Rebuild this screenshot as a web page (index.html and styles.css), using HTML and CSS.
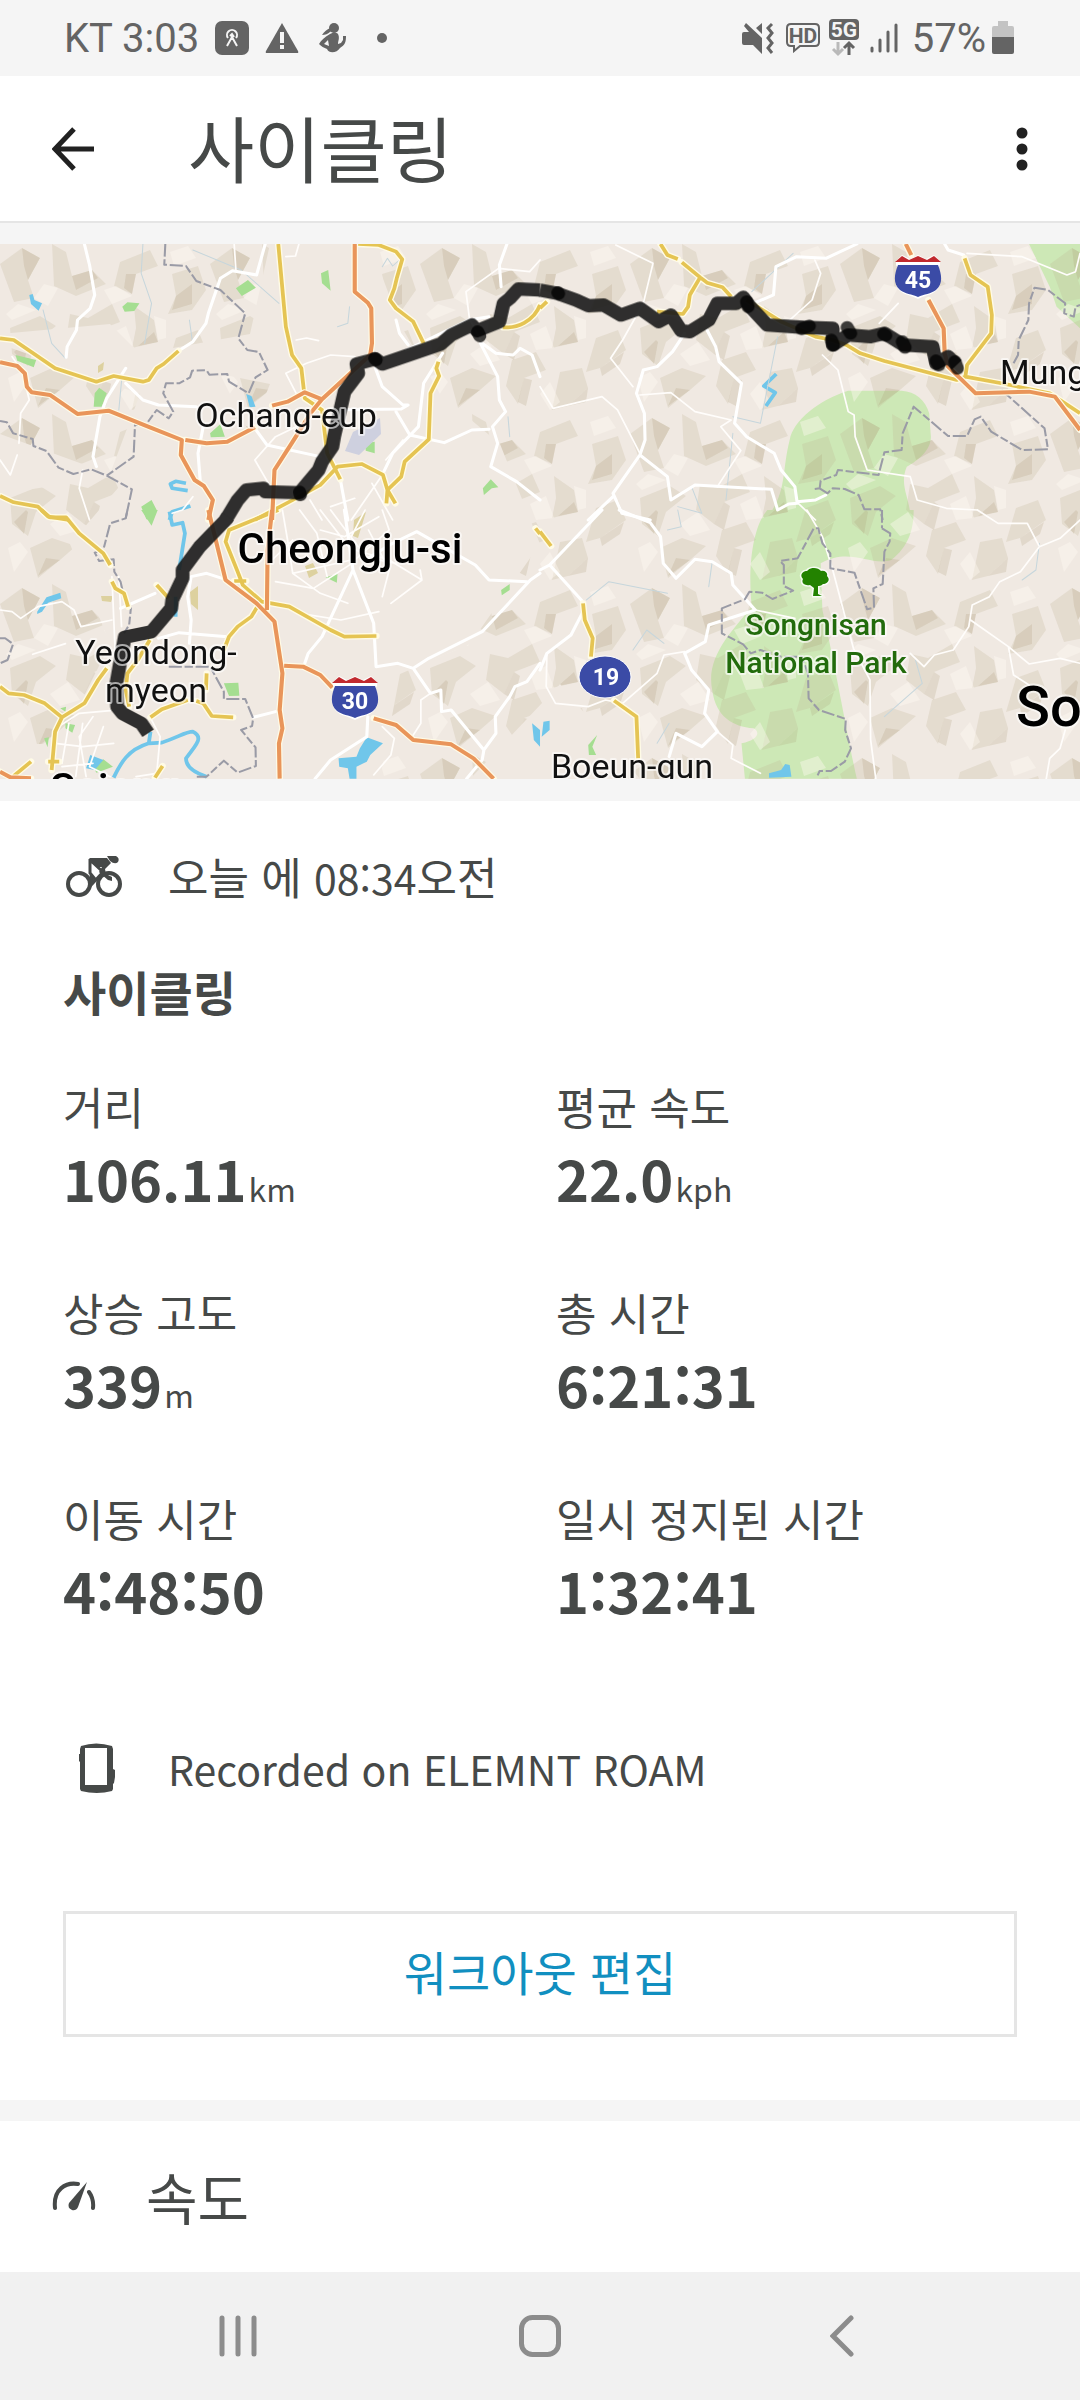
FILE: index.html
```html
<!DOCTYPE html>
<html lang="ko">
<head>
    <meta charset="UTF-8">
    <meta name="viewport" content="width=device-width, initial-scale=1.0">
    <title>사이클링</title>
    <link rel="stylesheet" href="styles.css">
</head>
<body>

    <div class="status-bar">
        <div class="status-left">
            <span>KT 3:03</span>
            <svg class="status-app" width="34" height="34" viewBox="0 0 34 34">
                <rect width="34" height="34" rx="7" fill="#646464"/>
                <path d="M13 17a5 5 0 1 1 8 0M12 25l5-9 5 9M15 15l2-2 2 3" fill="none" stroke="#f5f5f5" stroke-width="2"/>
            </svg>
            <svg width="34" height="30" viewBox="0 0 34 30">
                <path d="M17 0L33 28q1 2-1 2H2q-2 0-1-2z" fill="#646464"/>
                <path d="M15 9h4v11h-4zM15 22h4v4h-4z" fill="#f5f5f5"/>
            </svg>
            <svg class="status-person" width="28" height="32" viewBox="0 0 28 32">
                <circle cx="15" cy="6" r="5" fill="#646464"/>
                <path d="M12 6c-4 1-7 4-9 7 3 0 6-1 9-4zM11 12c3-2 6-2 8 0 2 4 0 7 0 10l3-1 2-3 0-4h3c0 6-1 9-6 12-3 5-11 6-13 1-3-1-6-3-8-5 2-4 6-7 11-10zM5 22l5 2-1-6z" fill="#646464" fill-rule="evenodd"/>
            </svg>
            <svg width="10" height="10" viewBox="0 0 10 10"><circle cx="5" cy="5" r="5" fill="#646464"/></svg>
        </div>
        <div class="status-right">
            <svg class="status-mute" width="32" height="32" viewBox="0 0 32 32">
                <path d="M0 12q0-2 2-2h5L2 4l2-3 16 15v16l-9-9H2q-2 0-2-2zM14 6l6-5v11z" fill="#646464"/>
                <path d="M30 2l-4 4 4 5-4 5 4 5-4 5 4 5" fill="none" stroke="#646464" stroke-width="3"/>
            </svg>
            <svg class="status-hd" width="34" height="30" viewBox="0 0 34 30">
                <path d="M5 1h24q4 0 4 4v14q0 4-4 4H14l-6 5v-5H5q-4 0-4-4V5q0-4 4-4z" fill="none" stroke="#646464" stroke-width="2"/>
                <text class="hd" x="17" y="20" text-anchor="middle">HD</text>
            </svg>
            <svg width="30" height="38" viewBox="0 0 30 38">
                <rect width="30" height="21" rx="4" fill="#646464"/>
                <text class="five-g" x="15" y="18" text-anchor="middle">5G</text>
                <path d="M9 23v12M4 30l5 5 5-5" fill="none" stroke="#b9b9b9" stroke-width="3"/>
                <path d="M20 36V24M15 29l5-5 5 5" fill="none" stroke="#646464" stroke-width="3"/>
            </svg>
            <svg class="status-signal" width="28" height="30" viewBox="0 0 28 30">
                <path d="M2 25v3M10 17v11M18 9v19M26 2v26" stroke="#646464" stroke-width="3" stroke-linecap="round"/>
            </svg>
            <span>57%</span>
            <svg class="status-battery" width="22" height="34" viewBox="0 0 22 34">
                <path d="M6 0h10v5h4q2 0 2 2v9H0V7q0-2 2-2h4z" fill="#c3c3c3"/>
                <path d="M0 16h22v15q0 2-2 2H2q-2 0-2-2z" fill="#646464"/>
            </svg>
        </div>
    </div>

    <header class="app-bar">
        <button class="icon-button" aria-label="뒤로">
            <svg width="42" height="44" viewBox="0 0 42 44"><path d="M22 2L3 22l19 20M3 22h39" fill="none" stroke="#212121" stroke-width="5"/></svg>
        </button>
        <h1>사이클링</h1>
        <button class="icon-button" aria-label="메뉴">
            <svg width="12" height="44" viewBox="0 0 12 44" fill="#212121"><circle cx="6" cy="6" r="5.5"/><circle cx="6" cy="22" r="5.5"/><circle cx="6" cy="38" r="5.5"/></svg>
        </button>
    </header>

    <div class="map">
        <svg viewBox="0 0 1080 535" role="img" aria-label="라이딩 경로 지도">
            <defs>
                <!-- hill shading facets -->
                <pattern id="relief" width="210" height="170" patternUnits="userSpaceOnUse">
                    <g fill="#b9ab8d" fill-opacity=".22">
                        <path d="M0 20l22-16 18 10-12 22 6 18-20 4zM52 0l14 8 6 24 20-6 14 14-30 12-22-10zM120 18l30-12 8 16-22 8-4 20-18-8zM172 30l26-8 8 24-14 20-24 4 8-18zM10 84l30-12 16 10-20 16-8 24-16-12zM70 70l18 4 24-14 8 18-26 10-10 22-18-14zM134 62l20 14 4 22-26 6 4-20zM176 94l22-8 8 20-26 18-14 4zM30 134l22-10 24 8-16 14-22 18zM92 116l24-8 10 18-22 8-6 26-12-18zM140 128l22-4 6 20-20 18-16 4z"/>
                    </g>
                    <g fill="#a5966f" fill-opacity=".2">
                        <path d="M22 4l18 10-12 22-4-14zM72 32l20-6 6 8-22 12zM136 30l-4 20-8-6 2-14zM176 52l16-12 0 20-20 6zM28 98l-4 22-10-12 12-12zM84 110l10-22 6 4-6 24zM158 98l-20 4 16-14zM180 124l24-16-4 12-18 12zM60 146l-22 16 8-18zM98 158l6-24 8 2-6 26zM148 162l20-18-2 14z"/>
                    </g>
                    <g fill="#fffaf2" fill-opacity=".4">
                        <path d="M34 54l10-14 14 4-10 18zM104 46l12-4 16 10-20 8zM6 70l12-10 18 6-24 10zM154 72l12 4 0 18-8 2zM110 90l16-8 8 22-18 2zM50 110l18-12 12 18-20 6zM8 134l12-6 8 10-14 20zM170 8l18-6 8 12-22 8zM120 150l10-12 10 20-10 8z"/>
                    </g>
                </pattern>
                <symbol id="shield" viewBox="0 0 48 45">
                    <path d="M2 7l6-6 8 4 8-4 8 4 8-4 6 6v4l-3 5c6 12 3 20-6 24-6 2-9 3-13 5-4-2-7-3-13-5-9-4-12-12-6-24l-3-5z" fill="#fff"/>
                    <path d="M1 8l7-6 7 4 9-4 9 4 7-4 7 6z" fill="#c1292e"/>
                    <path d="M4 11h40c4 10 5 19-2 25-5 4-12 4-18 7-6-3-13-3-18-7-7-6-6-15-2-25z" fill="#3b4ba6"/>
                </symbol>

                <!-- each road layer is split in four tiles -->
                <g id="minor">
                    <g transform="matrix(.3444 0 0 .3333 0 -4)">
                        <path d="M680 12L685 92M830 50l28-2 10-36M860 300l30-6 35 8M860 460l-30-60 60-30 70-25 70 5M1568 60l-30 35-90-10-95 70 10 80 40 80M740 660l60-70 60-30M740 660l45 80M35 350l30 45 20 85-25 40-5 90M0 660l30 45 20-60M240 690l-10 55 30 95M560 770l-30 40-30 10M900 780l35 60M1110 705l-40 60-50 75M1170 600l-50 60M1080 730l60 110M960 800l70-25"/>
                    </g>
                    <g transform="matrix(.3444 0 0 .3333 540 -4)">
                        <path d="M220 15l108 55-28 120-60 110-35 55 65 85M798 60l17 40-25 80-70 65M820 345l45 45 30 125 17 10 3 65 35 100 125 20 20 70 85 25 90 5M1040 190l-55 60M1240 40l160 10 130 55 25-10 13-55M0 440l38 65 142-35 45 40 65 130M290 465l90-7 70 57 105 25-30 20 58 72-68 108M750 790l50 50"/>
                    </g>
                    <g transform="matrix(.3444 0 0 .3333 0 266)">
                        <path d="M0 300l35 5 25 20 50-35 70-15 35 25 20 50 90-20M95 433l95-32M325 200l10 240M345 200l8 150M820 0l15 90 15 100 80 60 80 30M850 190l170-40M800 215l110 20 120-80M870 0l50 70 30 130M930 0l90 120M960 0l80 110M1060 0l-40 80M1100 20l-100 60-70-20M1110 0l20 60-100 90M850 90l-60 60M1070 60l60 120-20 80M1030 120l100 30 95 60M1220 180l5 30-90 70M870 310l120 20 110-25M1050 140l100 20M1250 550l-28 20 0 70-25 40M1110 650l35 35-10 50-50 60M170 650l60-40 90-8M160 700l80 10 90-10M200 640l-20 120M240 640l-20 160M270 620l-40 60 20 120M300 650l-40 120 60 30M440 630l25 50-10 110-60 10M180 770l90-10"/>
                    </g>
                    <g transform="matrix(.3444 0 0 .3333 540 266)">
                        <path d="M420 425l-60 10-20 55-100 90-50-10-50 20-95-10-27-50 2-100M515 665l45 40-5 40 85 45M775 0l45 80 30 100 60 235 48 95 2 180 15 116M625 300l115 25M1270 0l60 40h85l35 70-55 75-60 30-30 45-50 25-10 65-45 70-55 15-30 35-40-40M1250 330l110 80 60 52 90-17 58 15M1360 410l15 85 45 30M1525 660l-15 55-30 30-10 61M1450 110l60-25 58-55"/>
                    </g>
                </g>
                <g id="secondary">
                    <g transform="matrix(.3444 0 0 .3333 0 -4)">
                        <path d="M245 12l15 63 15 90-13 40-37 35-3 30-27 50-3 32M770 12l-25 93-70-13-35 23-35 105-7 30-38 55-42 28M365 385l-55 90-20 55-20 120 10 30M365 430l50 50 45 15 110 5M590 560l-15 80 7 90M740 565l35 50 155 35M1090 385l20 55 60 55 15 0-20 12-215 3M1395 310l50 100 5 70 18 35-38 45 15 50-20 70 75 45 68 55M1420 568l-50 2-80 38-100-23-40-70M1400 310l40 30 50 5 20-20 35 20 23 65M1472 12l-22 63 5 65M1285 340l-55 90-15 130-75 80-30 65M988 718l22 122M1150 240l10 40 25 35M1180 330l180-90 60-10"/>
                    </g>
                    <g transform="matrix(.3444 0 0 .3333 540 -4)">
                        <path d="M920 12l-90 43-85-5-60 30-7 85-58 25M485 270l25 50 10 45 65 65-20 120 35 40 80 50 20 50 40 50 7 50-25 2-32 18-18-62-222-13-70 45-10-70-80-65 15-45-2-80-23-60 20-70 40-10 45-45 35-55M290 645l-78 115 26 60 82 20M212 770l-72 70M1175 12l10 18 45 15M747 785l53-5 30-15"/>
                    </g>
                    <g transform="matrix(.3444 0 0 .3333 0 266)">
                        <path d="M350 295l100-45M555 200l45-10 45 15M555 200l-10 60 10 70-5 70M460 385l60-17 140 12M1000 0l25 180 60 160 7 130 63-10 45 15 45-30 155-80 50-55 90-100 28-20M1025 180l-90 200-40 50-10 30M1200 475l50 75 30-10 2 65 28-5 95 120-5 30-45 56M1405 720l35-50-2-50 42-60 15-30 35-15 38-55M735 622l65-17M1068 620l-3 60-105 70-45 56M1060 150l80-50 70-35 170 100 40 45 110 5"/>
                    </g>
                    <g transform="matrix(.3444 0 0 .3333 540 266)">
                        <path d="M180 0L28 165M0 180l28-15 92 105 5 10M230 0l90 38 30 42 8 80 37 45 55-57 50 7 55 35 5 35 65 75-135 45-10 50-60 35 20 50 50 60-12 70 37 55-45 45-75-40-20 70M125 305l-35 70-70 55-20 50"/>
                    </g>
                </g>
                <g id="primary">
                    <g transform="matrix(.3444 0 0 .3333 0 -4)">
                        <path d="M0 295l40 5 120 85 120 40 50-17 85 17 17-5 23-35 20-13 43-39M808 12l22 248 18 85 27 40 10 90 50 35 15 130 38 78M1040 12l60 3 50 20 18 23-16 57-7 30-13 35 18 25 50 40 30 65M1273 365l-6 20 8 23-25 52-5 138-70 67-10 45-40 40-3 40M1148 790l-23-40-13-45-62-33-70 8-50 55-80 45-110 60M1460 262c40 3 90-17 108-67M0 768l40 19 70 13 30 30 60 10"/>
                    </g>
                    <g transform="matrix(.3444 0 0 .3333 540 -4)">
                        <path d="M0 205l20-20M350 12l20 33 30 12M412 67l53 45 20 16 45 14 25 28M465 112l-30 53-5 35-15 22-75-7M600 180l100 65 100 45 50 10 40 15 40 25 70 23 210 57 25-10 5-35 70-95 2-55-12-85-50-35-17-50M1235 410l105 20 140 30 88 60"/>
                    </g>
                    <g transform="matrix(.3444 0 0 .3333 0 266)">
                        <path d="M120 0l25 22h47l38 48 70 60 20 35M325 215l10 20 25 15 12 40M455 225l35 40M808 0L665 60l-10 35 35 90 15 40 55 50 80 15 120 70 40 20 93-2M680 213h35M750 285l-20 35-40 30-25 30-15 40M600 490l-2 50M570 573l20 7 25 38 62 4M0 530l25 20 45 5 60 25 50 42-20 43-10 115M180 622l65-42 40-70 25-35M435 390l-35 60-30 40-5 50 10 50M437 622l33-24 75-28M40 798l50-43M450 803l22-35M140 755h32M1555 55l13 17"/>
                    </g>
                    <g transform="matrix(.3444 0 0 .3333 540 266)">
                        <path d="M0 65l32 43M125 280l5 50 23 55-5 55M215 572l65 48 5 125"/>
                    </g>
                </g>
                <g id="motorway">
                    <g transform="matrix(.3444 0 0 .3333 0 -4)">
                        <path d="M0 367l50 11 22 22 6 40 14 17 53 8 80 57 90-10 115 48 98 40-3 45 40 75 27 18 26 42-13 60M538 600l62 10 60-5 80-43M790 497l45-12 50-28 50 21 140-133 5-35-2-105-10-17-38-33V12M935 478l-30 37-55 90-53 85-7 150"/>
                    </g>
                    <g transform="matrix(.3444 0 0 .3333 540 -4)">
                        <path d="M1062 12l16 33M1128 180l44 85 3 75 10 40 80 80 155-5 75 15 73 100"/>
                    </g>
                    <g transform="matrix(.3444 0 0 .3333 0 266)">
                        <path d="M605 0l50 210 90 70 52 55 23 155-8 110 8 55-10 45 2 106M790 0l-13 120-2 180M825 467l55 3 50 25 35 38M1085 625l65 20 50 45 110 13 65 42 58 61M0 785l30 17 60 3"/>
                    </g>
                </g>
            </defs>

            <rect width="1080" height="535" fill="#f0e9e2"/>

            <!-- national park and woods -->
            <g fill="#cde8b6">
                <path transform="matrix(.3444 0 0 .3333 540 -4)" d="M895 452C810 480 735 540 725 600C700 700 720 760 650 845L1075 845C1080 780 1040 740 1065 680C1100 660 1135 630 1135 590L1130 520C1120 480 1090 455 1050 452zM1420 12L1480 140L1500 200L1568 265V12z"/>
                <path transform="matrix(.3444 0 0 .3333 540 266)" d="M660 0C610 60 605 200 615 290C560 360 480 440 500 540C510 620 560 650 620 655C640 665 635 690 585 700L595 806L920 806C900 720 860 480 820 300L815 160C900 110 960 170 1020 150C1070 110 1085 60 1085 0z"/>
            </g>
            <path fill="url(#relief)" d="M0 0H270L250 90L140 110L110 80L0 90zM0 100L140 150L110 230L0 190zM370 0H1080V535H640L560 440L470 535H380L400 430L470 400L540 300L500 200L440 150L400 80zM0 250L130 230L70 300L110 400L60 500H0zM220 130L270 140L250 190z"/>

            <g fill="#a5de91">
                <path transform="matrix(.3444 0 0 .3333 0 -4)" d="M685 145L720 120L743 143L702 168zM932 100L953 90L960 152L935 130zM355 200L370 187L405 190L390 213L362 215zM45 345L105 360L98 382L50 362zM275 460L288 443L310 460L295 500H272zM610 580L640 552L653 590L612 592zM1060 610L1088 605V640L1062 632zM1402 745L1425 718L1447 742L1428 745L1405 765zM410 800L440 780L455 810L440 840L425 838z"/>
                <path transform="matrix(.3444 0 0 .3333 0 266)" d="M410 0H458L440 47zM650 520L692 518L695 557L665 558zM945 202L980 192L978 218zM1455 240L1480 222V240L1457 256zM190 640L218 645L210 668L190 655zM128 685L142 682L138 712zM270 770L300 748L328 770L280 788zM175 595L192 590L190 605z"/>
                <path transform="matrix(.3444 0 0 .3333 540 266)" d="M140 705L166 675L152 710L163 735L142 735z"/>
            </g>
            <path fill="#ddd19f" d="M190 348l8-6v24l-7-6zM354 276l12-8-8 26-5-2zM305 322l8-3 5 10-9 5zM98 122l6-4-1 8-5 3zM101 352l12 0-2 6-9-1z"/>
            <path fill="#ced0df" d="M345 207l8-19 27-14 1 16-22 21z"/>
            <g fill="#70c6ea">
                <path transform="matrix(.3444 0 0 .3333 0 -4)" d="M85 165L95 162L100 180L122 190L112 212L90 192zM715 462L730 468L742 500L725 502z"/>
                <path transform="matrix(.3444 0 0 .3333 0 266)" d="M108 305L135 262L175 248L178 265L140 278L122 305L108 312zM1065 682L1112 700L1075 735L1065 755L1035 770V806H1015L1010 775L985 770L983 745L1035 740L1045 715zM250 775L262 735L300 750L275 780zM1545 640L1568 660V710L1550 690z"/>
                <path transform="matrix(.3444 0 0 .3333 540 266)" d="M10 635L28 632V660L5 680zM665 790L700 780L712 762L725 765L730 800L665 803z"/>
            </g>
            <g class="water">
                <path transform="matrix(.3444 0 0 .3333 0 -4)" d="M540 730L510 724L495 732L500 745L545 752M553 798L500 815L492 840"/>
                <path transform="matrix(.3444 0 0 .3333 0 266)" d="M492 5L500 45L530 38L537 70L520 180M510 260V320M437 665L432 700C370 720 350 760 330 803M432 700L470 698C520 680 540 665 560 665C590 680 575 700 540 745C540 775 570 790 600 800"/>
                <path transform="matrix(.3444 0 0 .3333 540 -4)" d="M686 402L650 438L683 458L656 498"/>
            </g>
            <g class="stream">
                <path transform="matrix(.3444 0 0 .3333 0 -4)" d="M125 210L150 310L190 355M415 12L410 100L440 190L420 310M355 400L345 510M560 30L700 90L810 190M550 240L558 300M1110 80L1125 55L1140 78L1160 60M1015 200L1010 250L980 260M1475 530L1480 590"/>
                <path transform="matrix(.3444 0 0 .3333 540 -4)" d="M615 155L735 40M690 290L640 550L560 530M440 740L470 820L400 800M560 580L540 780"/>
                <path transform="matrix(.3444 0 0 .3333 540 266)" d="M400 0L410 50L370 60M135 270L200 215L370 250M270 420L310 360L360 400M500 155L490 230M1090 450L1110 520L1000 620M1450 100L1440 180L1400 210M340 700L375 640"/>
            </g>

            <use href="#minor" class="road-minor"/>
            <use href="#secondary" class="road-secondary"/>
            <g class="border-line">
                <path transform="matrix(.3444 0 0 .3333 0 -4)" d="M480 12L477 74L540 78L570 123L640 150L712 220L692 295L718 330L752 336L777 390L742 412L722 460L665 425L660 402L608 404L600 391L558 392L552 412L520 430H482L474 460L503 515L490 535L455 510L425 552L392 555L388 650L310 707L265 688L213 702L170 683L135 633L97 618L95 597L38 580L20 547L0 543M310 707L383 748L365 835"/>
                <path transform="matrix(.3444 0 0 .3333 540 -4)" d="M1375 370L1388 345L1390 300L1418 240L1420 190L1436 143L1475 150L1525 190L1522 220L1550 230L1555 200L1568 195M1340 450L1465 565L1475 628L1400 630L1310 575L1280 530L1262 538L1240 588H1185L1085 500L1053 580L1050 630L1000 637L983 705L865 690L860 705L815 722L812 745L790 748M812 745L835 760L850 745L885 747L925 765L942 808H988L995 840"/>
                <path transform="matrix(.3444 0 0 .3333 0 266)" d="M370 0L365 25L320 40L300 120L275 128L288 153L330 148L332 185L350 215L362 270L380 295L375 345L360 370M0 385H15L38 402L22 450L0 460M490 470H610L650 545V567H712L735 625L732 648L700 660L742 712L743 768L690 788L650 752L600 800H565"/>
                <path transform="matrix(.3444 0 0 .3333 540 266)" d="M993 55L1017 70L1015 95L1000 125L995 222L968 235L970 293L950 298L913 188L843 175V130L820 100L808 55H795L748 145L697 153L708 165V228L735 242L675 267L645 248L608 245L595 268L528 295V370L590 403L612 430L640 420L700 440H760L778 490L780 565L810 600L888 627L886 660L903 715L885 755L845 783H812L803 803M993 0V55"/>
            </g>
            <use href="#primary" class="road-casing"/>
            <use href="#primary" class="road-primary"/>
            <use href="#motorway" class="road-casing"/>
            <use href="#motorway" class="road-motorway"/>

            <!-- ridden track -->
            <g class="track">
                <path transform="matrix(.3444 0 0 .3333 0 -4)" d="M1568 150L1505 147L1480 175L1462 190L1450 245L1385 272L1370 255L1310 285L1280 312L1110 372L1090 357L1035 372L1040 400L1000 455L970 590L965 620L935 665L925 690L870 758L770 755L765 745L715 750L690 780L655 840"/>
                <path transform="matrix(.3444 0 0 .3333 540 -4)" d="M0 150L50 160L105 180L140 197L185 195L235 225L290 205L345 245L380 225L410 272L435 275L490 240L515 190H570L590 172L610 200L660 255L765 262L850 265V315L895 285L960 290L1000 280L1055 315L1140 320L1150 370L1185 350L1210 375"/>
                <path transform="matrix(.3444 0 0 .3333 0 266)" d="M662 20L655 30L580 110L530 180V205L500 270L497 295L440 365L362 382L350 450L338 520L340 590L355 610L410 640L430 670"/>
            </g>
            <g class="track-stops">
                <path transform="matrix(.3444 0 0 .3333 0 -4)" d="M1387 275L1393 288M1088 355L1092 360M870 756L872 765"/>
                <path transform="matrix(.3444 0 0 .3333 540 -4)" d="M52 158L54 161M760 266L782 258M892 262L902 280M998 282L1004 286M1052 305L1060 322M1205 365L1212 385M846 300L852 315M600 185L604 200M1150 362L1158 375"/>
            </g>

            <use href="#shield" x="894" y="10" width="48" height="45"/>
            <use href="#shield" x="331" y="431" width="48" height="45"/>
            <ellipse cx="605" cy="433" rx="26" ry="21" fill="#3b4ba6" stroke="#fff" stroke-width="1"/>
            <g class="shield-text">
                <text x="918" y="44">45</text>
                <text x="355" y="465">30</text>
                <text x="606" y="441">19</text>
            </g>

            <path class="tree" d="M813 352l1-8-4-3c-6 1-9-2-7-6-4-4 0-8 4-8 3-4 11-4 14 0 4-1 7 2 6 5 4 4 0 8-4 8-2 2-4 2-5 2v8l4 2h-10z"/>
            <g class="place">
                <text x="286" y="183">Ochang-eup</text>
                <text x="156" y="420">Yeondong-</text>
                <text x="156" y="458">myeon</text>
                <text x="632" y="534">Boeun-gun</text>
                <text class="start" x="1000" y="140">Mung</text>
            </g>
            <g class="city">
                <text x="350" y="319">Cheongju-si</text>
                <text class="start" x="50" y="559">Sejong</text>
            </g>
            <text class="region start" x="1016" y="482">So</text>
            <g class="park">
                <text x="816" y="391">Songnisan</text>
                <text x="816" y="429">National Park</text>
            </g>
        </svg>
    </div>

    <main class="workout">
        <div class="info-row">
            <svg width="56" height="42" viewBox="0 0 56 42">
                <g fill="none" stroke="#464948" stroke-width="4"><circle cx="13" cy="28" r="11"/><circle cx="43" cy="28" r="11"/></g>
                <path d="M23 2h18l4 5-6 6 1 5 6 3 0 4-4-1-7-6-2-2 3-5-5 0z" fill="#464948"/>
                <path d="M41 0h9q4 2 2 6-3 3-8-1z" fill="#464948"/>
                <path d="M24 3v14l5 6-4 5M24 4l13 12-11 12-1-10" fill="none" stroke="#464948" stroke-width="3"/>
            </svg>
            <p class="date">오늘 에 <span>08:34</span>오전</p>
        </div>

        <h2>사이클링</h2>

        <dl class="stats">
            <div><dt>거리</dt><dd>106.11<small>km</small></dd></div>
            <div><dt>평균 속도</dt><dd>22.0<small>kph</small></dd></div>
            <div><dt>상승 고도</dt><dd>339<small>m</small></dd></div>
            <div><dt>총 시간</dt><dd>6:21:31</dd></div>
            <div><dt>이동 시간</dt><dd>4:48:50</dd></div>
            <div><dt>일시 정지된 시간</dt><dd>1:32:41</dd></div>
        </dl>

        <div class="info-row">
            <svg width="56" height="50" viewBox="0 0 56 50">
                <path d="M15 3q15-5 31 0l1 3v20l2 1v7l-1 6-1 1v5l-1 2q-15 4-31 0l-1-2V19l-1-1v-7h1V6zM19 5v37h22V5z" fill="#464948" fill-rule="evenodd"/>
            </svg>
            <p>Recorded on ELEMNT ROAM</p>
        </div>

        <button class="edit-button">워크아웃 편집</button>
    </main>

    <section class="speed">
        <svg width="44" height="30" viewBox="0 0 44 30">
            <path d="M3 27C1 8 14 1 26 3M37 11q5 7 4 16" fill="none" stroke="#464948" stroke-width="4" stroke-linecap="round"/>
            <path d="M35 1L26 26q-2 4-6 3-5-2-3-7z" fill="#464948"/>
        </svg>
        <h3>속도</h3>
    </section>

    <nav class="nav-bar">
        <button aria-label="최근 앱">
            <svg width="38" height="42" viewBox="0 0 38 42"><path d="M3 3v36M19 3v36M35 3v36" stroke="#8c8c8c" stroke-width="5" stroke-linecap="round"/></svg>
        </button>
        <button aria-label="홈">
            <svg width="42" height="42" viewBox="0 0 42 42"><rect x="2.5" y="2.5" width="37" height="37" rx="11" fill="none" stroke="#8c8c8c" stroke-width="5"/></svg>
        </button>
        <button aria-label="뒤로">
            <svg width="24" height="42" viewBox="0 0 24 42"><path d="M21 3L3 21l18 18" fill="none" stroke="#8c8c8c" stroke-width="5" stroke-linecap="round"/></svg>
        </button>
    </nav>

</body>
</html>
```

FILE: styles.css
```css
body {
    font-family: "Noto Sans CJK KR", sans-serif;
    background-color: #f5f5f5;
    color: #464948;
    margin: 0;
    padding: 0;
    min-height: 100vh;
    display: flex;
    flex-direction: column;
}
h1, h2, h3, p, dl, dd {
    margin: 0;
    font-weight: 400;
}
svg {
    display: block;
    flex-shrink: 0;
}
button {
    background: none;
    border: none;
    padding: 0;
    font-family: inherit;
    cursor: pointer;
}
.status-bar {
    display: flex;
    justify-content: space-between;
    align-items: center;
    height: 76px;
    padding: 0 66px 0 64px;
    font-family: Roboto, sans-serif;
    font-size: 40px;
    color: #646464;
}
.status-left, .status-right {
    display: flex;
    align-items: center;
}
.status-left {
    gap: 16px;
}
.status-person {
    margin: 0 14px 0 4px;
}
.status-right {
    gap: 6px;
}
.status-mute {
    margin-right: 6px;
}
.status-hd {
    margin-right: 3px;
}
.status-signal {
    margin: 0 8px 0 5px;
}
.hd, .five-g {
    font-family: Roboto, sans-serif;
    font-weight: 700;
    font-size: 21px;
    fill: #646464;
}
.five-g {
    fill: #f5f5f5;
}
.app-bar {
    display: flex;
    align-items: center;
    height: 145px;
    padding: 0 52px;
    background-color: white;
    border-bottom: 2px solid #e5e5e5;
}
.app-bar h1 {
    flex: 1;
    margin-left: 94px;
    padding-bottom: 6px;
    font-size: 72px;
    line-height: 100px;
}
.map {
    margin: 21px 0 22px;
}
.map svg {
    width: 100%;
    height: auto;
    overflow: hidden;
}
.water, .stream, .border-line, .track, .track-stops,
.road-minor, .road-secondary, .road-casing, .road-primary, .road-motorway {
    fill: none;
    stroke-linejoin: round;
    stroke-linecap: round;
}
.water {
    stroke: #70c6ea;
    stroke-width: 11;
    stroke-linecap: butt;
}
.stream {
    stroke: #c6d6dc;
    stroke-width: 3;
}
.border-line {
    stroke: #9a9ba6;
    stroke-width: 6;
    stroke-dasharray: 38 8 24 8;
    stroke-linecap: butt;
}
.road-minor {
    stroke: #fffdfb;
    stroke-width: 5;
}
.road-secondary {
    stroke: #fff;
    stroke-width: 9;
}
.road-casing {
    stroke: #fffbe6;
    stroke-width: 19;
}
.road-primary {
    stroke: #e5c453;
    stroke-width: 11;
    stroke-linecap: butt;
}
.road-motorway {
    stroke: #e9955a;
    stroke-width: 12;
    stroke-linecap: butt;
}
.track {
    stroke: #1c1c1c;
    stroke-width: 40;
    stroke-linecap: butt;
    opacity: 0.91;
}
.track-stops {
    stroke: #000;
    stroke-width: 38;
    opacity: 0.75;
}
.place, .city, .region, .park, .shield-text {
    font-family: Roboto, sans-serif;
    font-size: 34px;
    text-anchor: middle;
    fill: #111;
    stroke: rgba(255, 255, 255, 0.6);
    stroke-width: 4px;
    stroke-linejoin: round;
    paint-order: stroke;
}
.city {
    font-size: 42px;
    font-weight: 500;
    fill: #000;
}
.region {
    font-size: 56px;
    font-weight: 500;
    fill: #000;
}
.park {
    font-size: 30px;
    font-weight: 500;
    fill: #226b0c;
}
.tree {
    fill: #238200;
    stroke: rgba(255, 255, 255, 0.8);
    stroke-width: 3px;
    paint-order: stroke;
}
.shield-text {
    font-size: 23px;
    font-weight: 700;
    fill: white;
    stroke: none;
}
.start {
    text-anchor: start;
}
.workout {
    background-color: white;
    padding: 43px 63px 63px;
}
.info-row {
    display: flex;
    align-items: center;
    gap: 46px;
    padding-left: 3px;
    font-size: 41px;
    line-height: 64px;
}
.date {
    font-size: 44px;
}
.date span {
    font-size: 41px;
}
.workout h2 {
    margin: 50px 0 51px;
    font-size: 47px;
    line-height: 64px;
    font-weight: 700;
}
.stats {
    display: grid;
    grid-template-columns: 1fr 1fr;
    column-gap: 32px;
    row-gap: 66px;
}
.stats dt {
    font-size: 44px;
    line-height: 64px;
}
.stats dd {
    margin-top: 4px;
    font-size: 56px;
    font-weight: 700;
    line-height: 72px;
}
.stats small {
    margin-left: 2px;
    font-size: 32px;
    font-weight: 400;
    line-height: 32px;
}
.stats + .info-row {
    margin-top: 110px;
}
.edit-button {
    display: block;
    width: 100%;
    margin-top: 111px;
    padding: 25px 28px 31px;
    border: 3px solid #e5e5e5;
    font-size: 47px;
    line-height: 64px;
    color: #118fc0;
}
.speed {
    display: flex;
    align-items: center;
    gap: 50px;
    margin-top: 21px;
    padding: 35px 52px 36px;
    background-color: white;
}
.speed h3 {
    font-size: 56px;
    line-height: 80px;
}
.nav-bar {
    display: flex;
    flex: 1;
    padding: 0 8%;
    background-color: #f1f1f1;
}
.nav-bar button {
    display: flex;
    flex: 1;
    min-height: 126px;
    align-items: center;
    justify-content: center;
}
```
